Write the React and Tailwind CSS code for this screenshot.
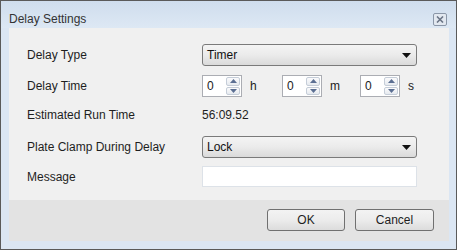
import React from 'react';

const font = { fontFamily: '"Liberation Sans", Arial, sans-serif' };

function Combo({ value }) {
  return (
    <div className="w-[215px] h-[22px] flex items-center justify-between pl-[4px] pr-[5px] border border-[#7a7a7a] rounded-[3px] bg-gradient-to-b from-[#f4f4f4] via-[#ebebeb] to-[#dadada] text-[12px] text-[#111]">
      <span>{value}</span>
      <svg width="9" height="5" viewBox="0 0 9 5"><path d="M0 0h9L4.5 5z" fill="#111" /></svg>
    </div>
  );
}

function Spin({ unit, w }) {
  return (
    <div className={`flex items-center ${w}`}>
      <div className="w-[40px] h-[22px] flex border border-[#abadb3] bg-white">
        <span className="flex-1 pl-[4px] text-[12px] leading-[20px] text-[#222]">0</span>
        <div className="w-[16px] flex flex-col p-[1px] gap-[1px]">
          <div className="flex-1 flex items-center justify-center border border-[#c5cdd8] rounded-[2px] bg-gradient-to-b from-[#fbfbfc] to-[#e6eaef]">
            <svg width="7" height="4" viewBox="0 0 7 4"><path d="M0 4L3.5 0 7 4z" fill="#5b6f93" /></svg>
          </div>
          <div className="flex-1 flex items-center justify-center border border-[#c5cdd8] rounded-[2px] bg-gradient-to-b from-[#fbfbfc] to-[#e6eaef]">
            <svg width="7" height="4" viewBox="0 0 7 4"><path d="M0 0h7L3.5 4z" fill="#5b6f93" /></svg>
          </div>
        </div>
      </div>
      <span className="ml-[8px] text-[12px] text-[#222]">{unit}</span>
    </div>
  );
}

function Row({ label, className = '', children }) {
  return (
    <div className={`flex items-center ${className}`}>
      <span className="w-[175px] text-[12px] text-[#1e1e1e]">{label}</span>
      {children}
    </div>
  );
}

function Btn({ children, w }) {
  return (
    <button className={`${w} h-[22px] border border-[#707070] rounded-[3px] bg-gradient-to-b from-[#f3f3f3] via-[#ececec] to-[#dcdcdc] text-[12px] text-[#1e1e1e]`}>
      {children}
    </button>
  );
}

export default function App() {
  return (
    <div style={font} className="w-[457px] h-[250px] border border-[#5a5a5a] bg-[#dbe6f3] flex flex-col">
      {/* title bar */}
      <div className="h-[27px] shrink-0 flex items-center justify-between pl-[8px] pr-[9px] bg-gradient-to-b from-[#cfdded] to-[#dde8f4]">
        <span className="text-[12px] text-[#333] mt-[8px]">Delay Settings</span>
        <div className="w-[14px] h-[13px] mt-[9px] border border-[#8b97a8] rounded-[2px] bg-[#e2e8f0] flex items-center justify-center">
          <svg width="8" height="7" viewBox="0 0 8 7">
            <path d="M1 0.5L7 6.5M7 0.5L1 6.5" stroke="#6b7586" strokeWidth="1.6" />
          </svg>
        </div>
      </div>

      {/* client */}
      <div className="mx-[8px] w-[440px] h-[213px] flex flex-col">
        <div className="h-[172px] bg-[#f0f0f0] pl-[18px] pt-[16px] flex flex-col">
          <Row label="Delay Type"><Combo value="Timer" /></Row>
          <Row label="Delay Time" className="mt-[9px]">
            <div className="flex">
              <Spin unit="h" w="w-[80px]" />
              <Spin unit="m" w="w-[78px]" />
              <Spin unit="s" w="w-[57px]" />
            </div>
          </Row>
          <Row label="Estimated Run Time" className="mt-[9px] h-[18px]">
            <span className="text-[12px] text-[#1e1e1e]">56:09.52</span>
          </Row>
          <Row label="Plate Clamp During Delay" className="mt-[12px]"><Combo value="Lock" /></Row>
          <Row label="Message" className="mt-[8px]">
            <div className="w-[215px] h-[21px] border border-[#dde2e8] bg-white" />
          </Row>
        </div>
        <div className="flex-1 bg-[#e3e3e3] flex justify-end items-start pt-[9px] pr-[15px] gap-[10px]">
          <Btn w="w-[78px]">OK</Btn>
          <Btn w="w-[79px]">Cancel</Btn>
        </div>
      </div>
    </div>
  );
}
